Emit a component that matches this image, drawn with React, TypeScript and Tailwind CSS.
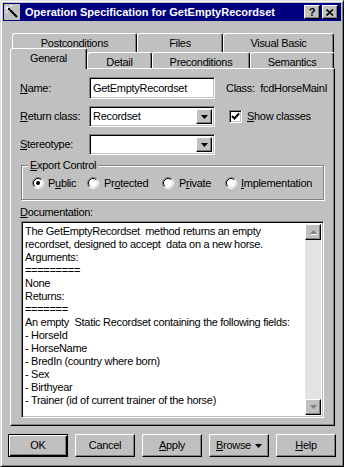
import React from "react";

const raised =
  "border border-t-white border-l-white border-r-black border-b-black shadow-[inset_-1px_-1px_0_#808080]";
const sunken =
  "border border-t-[#808080] border-l-[#808080] border-r-white border-b-white shadow-[inset_1px_1px_0_#000,inset_-1px_-1px_0_#c0c0c0]";

const DownArrow = ({ color = "#000" }: { color?: string }) => (
  <svg width="7" height="4" viewBox="0 0 7 4">
    <polygon points="0,0 7,0 3.5,4" fill={color} />
  </svg>
);

const Radio = ({ checked }: { checked?: boolean }) => (
  <svg width="12" height="12" viewBox="0 0 12 12" className="shrink-0">
    <circle cx="6" cy="6" r="4.5" fill="#fff" />
    <path d="M2.11 9.89 A5.5 5.5 0 0 1 9.89 2.11" stroke="#808080" fill="none" />
    <path d="M9.89 2.11 A5.5 5.5 0 0 1 2.11 9.89" stroke="#fff" fill="none" />
    <path d="M2.82 9.18 A4.5 4.5 0 0 1 9.18 2.82" stroke="#000" fill="none" />
    <path d="M9.18 2.82 A4.5 4.5 0 0 1 2.82 9.18" stroke="#dfdfdf" fill="none" />
    {checked && <circle cx="6" cy="6" r="2" fill="#000" />}
  </svg>
);

const Combo = ({ value }: { value: string }) => (
  <div className={`w-[126px] h-[21px] bg-white flex items-center p-[2px] ${sunken}`}>
    <span className="flex-1 pl-[1px]">{value}</span>
    <div className={`w-[16px] h-full bg-[#c0c0c0] flex items-center justify-center ${raised}`}>
      <DownArrow />
    </div>
  </div>
);

const Tab = ({ label, w, selected }: { label: string; w: string; selected?: boolean }) => (
  <div
    className={`${w} ${selected ? "h-[21px] -mb-[1px] relative z-10" : "h-full"} bg-[#c0c0c0] rounded-t-[3px] border border-b-0 border-t-white border-l-white border-r-black shadow-[inset_-1px_0_0_#808080] flex justify-center pt-[3px]`}
  >
    {label}
  </div>
);

const Button = ({ children, def }: { children: React.ReactNode; def?: boolean }) => (
  <div
    className={`w-[60px] h-[23px] flex items-center justify-center ${
      def
        ? "border border-black shadow-[inset_1px_1px_0_#fff,inset_-1px_-1px_0_#000,inset_-2px_-2px_0_#808080]"
        : raised
    }`}
  >
    {children}
  </div>
);

const doc = [
  "The GetEmptyRecordset  method returns an empty",
  "recordset, designed to accept  data on a new horse.",
  "Arguments:",
  "=========",
  "None",
  "Returns:",
  "=======",
  "An empty  Static Recordset containing the following fields:",
  "- HorseId",
  "- HorseName",
  "- BredIn (country where born)",
  "- Sex",
  "- Birthyear",
  "- Trainer (id of current trainer of the horse)",
];

const App = () => {
  return (
    <div className="w-[344px] h-[467px] bg-[#c0c0c0] font-['Liberation_Sans',Arial,sans-serif] text-[11px] leading-[13px] tracking-[-0.3px] text-black border border-t-[#dfdfdf] border-l-[#dfdfdf] border-r-black border-b-black shadow-[inset_1px_1px_0_#fff,inset_-1px_-1px_0_#808080] p-[2px] flex flex-col">
      {/* title bar */}
      <div className="h-[18px] bg-[#000080] flex items-center pl-[1px] pr-[3px] tracking-normal">
        <svg width="16" height="16" viewBox="0 0 16 16">
          <rect width="16" height="16" fill="#c0c0c0" />
          <line x1="6" y1="6" x2="13" y2="13" stroke="#000" strokeWidth="2" />
          <path d="M3 2v4M1 4h4M7 1v2M6 2h2M2 8h2" stroke="#fff" strokeWidth="1" />
          <rect x="4" y="4" width="2" height="2" fill="#000" />
        </svg>
        <span className="ml-[5px] text-white font-bold text-[11px] flex-1">
          Operation Specification for GetEmptyRecordset
        </span>
        <div className={`w-[16px] h-[14px] bg-[#c0c0c0] flex items-center justify-center font-bold text-[11px] ${raised}`}>
          ?
        </div>
        <div className={`ml-[2px] w-[16px] h-[14px] bg-[#c0c0c0] flex items-center justify-center ${raised}`}>
          <svg width="8" height="7" viewBox="0 0 8 7">
            <path d="M0.5 0.5 L7 6.5 M7 0.5 L0.5 6.5" stroke="#000" strokeWidth="1.6" />
          </svg>
        </div>
      </div>

      <div className="pl-[7px] mt-[12px]">
        {/* tab rows */}
        <div className="flex h-[19px] ml-[2px]">
          <Tab label="Postconditions" w="w-[125px]" />
          <Tab label="Files" w="w-[86px]" />
          <Tab label="Visual Basic" w="w-[111px]" />
        </div>
        <div className="flex h-[16px] items-end">
          <Tab label="General" w="w-[77px]" selected />
          <Tab label="Detail" w="w-[65px]" />
          <Tab label="Preconditions" w="w-[98px]" />
          <Tab label="Semantics" w="w-[84px]" />
        </div>

        {/* panel */}
        <div className="w-[325px] h-[358px] border border-t-white border-l-white border-r-black border-b-black shadow-[inset_-1px_-1px_0_#808080] pl-[9px] pt-[8px] flex flex-col">
          <div className="flex items-center h-[22px]">
            <span className="w-[69px]">
              <u>N</u>ame:
            </span>
            <div className={`w-[126px] h-[22px] bg-white flex items-center pl-[3px] ${sunken}`}>
              GetEmptyRecordset
            </div>
            <span className="ml-[11px] whitespace-pre">Class:  fcdHorseMainI</span>
          </div>
          <div className="flex items-center h-[21px] mt-[7px]">
            <span className="w-[69px]">
              <u>R</u>eturn class:
            </span>
            <Combo value="Recordset" />
            <div className={`ml-[14px] w-[13px] h-[13px] bg-white ${sunken} flex items-center justify-center`}>
              <svg width="9" height="9" viewBox="0 0 9 9">
                <polyline points="1,4 3.5,6.5 8,1.5" stroke="#000" strokeWidth="2" fill="none" />
              </svg>
            </div>
            <span className="ml-[5px]">
              <u>S</u>how classes
            </span>
          </div>
          <div className="flex items-center h-[21px] mt-[7px]">
            <span className="w-[69px]">
              <u>S</u>tereotype:
            </span>
            <Combo value="" />
          </div>

          {/* group box */}
          <div className="relative ml-[1px] mt-[10px] w-[303px] h-[35px] border border-[#808080] shadow-[1px_1px_0_#fff,inset_1px_1px_0_#fff] flex items-center pl-[10px] pt-[1px]">
            <span className="absolute -top-[7px] left-[6px] bg-[#c0c0c0] px-[2px]">
              <u>E</u>xport Control
            </span>
            <div className="flex items-center gap-[4px] w-[55px]">
              <Radio checked />
              <span>
                P<u>u</u>blic
              </span>
            </div>
            <div className="flex items-center gap-[5px] w-[75px]">
              <Radio />
              <span>
                Pr<u>o</u>tected
              </span>
            </div>
            <div className="flex items-center gap-[5px] w-[63px]">
              <Radio />
              <span>
                P<u>r</u>ivate
              </span>
            </div>
            <div className="flex items-center gap-[4px]">
              <Radio />
              <span>
                <u>I</u>mplementation
              </span>
            </div>
          </div>

          <div className="mt-[6px]">
            <u>D</u>ocumentation:
          </div>
          <div className={`ml-[1px] mt-[2px] w-[303px] h-[197px] bg-white flex p-[2px] ${sunken}`}>
            <div className="flex-1 pl-[1px] pt-[1px] whitespace-pre">
              {doc.map((l, i) => (
                <div key={i}>{l}</div>
              ))}
            </div>
            <div className="w-[16px] flex flex-col bg-[#e3e3e3]">
              <div className={`h-[16px] bg-[#c0c0c0] flex items-center justify-center ${raised}`}>
                <svg width="7" height="5" viewBox="0 0 7 5">
                  <polygon points="3.5,0 7,4 0,4" fill="#808080" />
                  <line x1="1" y1="4.5" x2="7.5" y2="4.5" stroke="#fff" />
                </svg>
              </div>
              <div className="flex-1" />
              <div className={`h-[16px] bg-[#c0c0c0] flex items-center justify-center ${raised}`}>
                <DownArrow color="#808080" />
              </div>
            </div>
          </div>
        </div>
      </div>

      {/* buttons */}
      <div className="flex gap-[7px] pl-[5px] mt-[8px]">
        <Button def>OK</Button>
        <Button>Cancel</Button>
        <Button>
          <span>
            <u>A</u>pply
          </span>
        </Button>
        <Button>
          <span className="flex items-center gap-[4px]">
            <span>
              <u>B</u>rowse
            </span>
            <DownArrow />
          </span>
        </Button>
        <Button>
          <span>
            <u>H</u>elp
          </span>
        </Button>
      </div>
    </div>
  );
};

export default App;
